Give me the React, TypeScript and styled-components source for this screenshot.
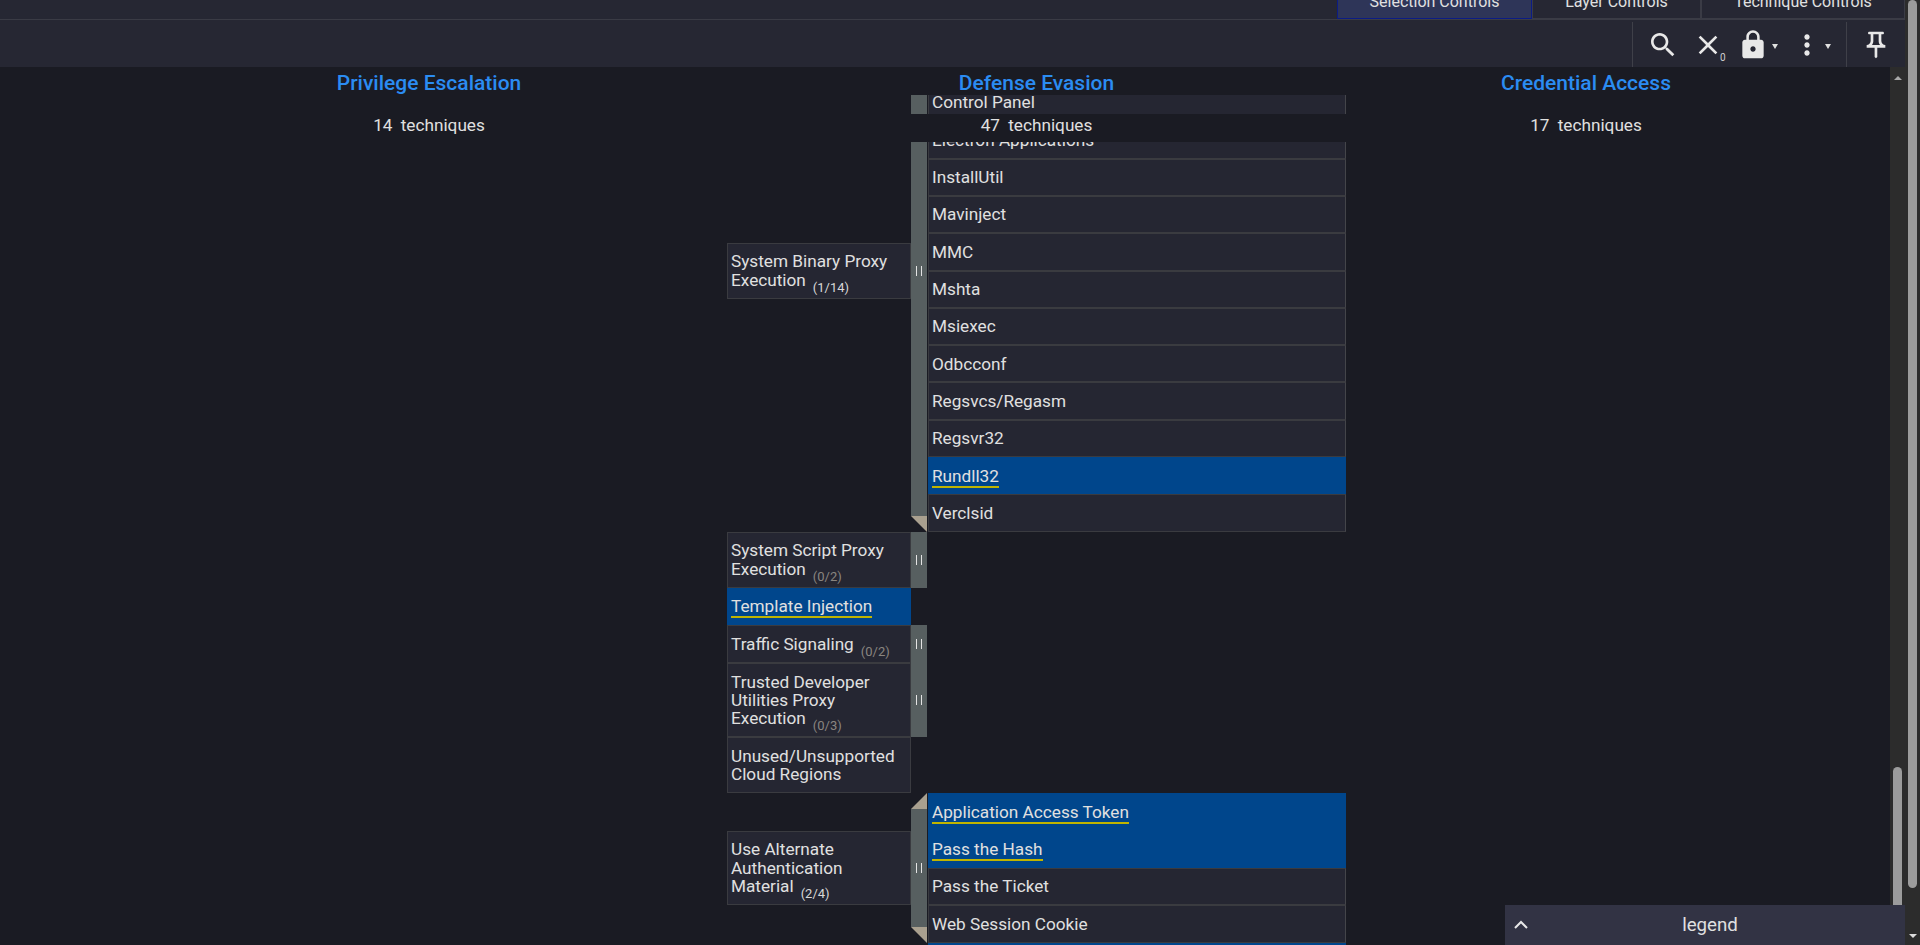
import React from "react";
import styled, { createGlobalStyle } from "styled-components";

const Global = createGlobalStyle`
  html, body { margin: 0; padding: 0; height: 100%; overflow: hidden; background: #1a1b23; }
  #root { height: 100%; }
  * { box-sizing: border-box; }
`;

const Page = styled.div`
  display: flex;
  width: 1920px;
  height: 945px;
  overflow: hidden;
  position: relative;
  font-family: Roboto, "Liberation Sans", sans-serif;
  font-size: 17.2px;
  line-height: 18.4px;
  color: #e0e0e0;
  background: #1a1b23;
`;
const Main = styled.div`
  flex: 1;
  min-width: 0;
  display: flex;
  flex-direction: column;
`;
const Header = styled.header`
  height: 67px;
  flex: none;
  background: #262733;
  display: flex;
  flex-direction: column;
`;
const Tabs = styled.div`
  height: 20px;
  flex: none;
  display: flex;
  justify-content: flex-end;
  align-items: flex-end;
  border-bottom: 1px solid #3a3b45;
`;
const Tab = styled.div<{ $w: number; $active?: boolean }>`
  width: ${(p) => p.$w}px;
  height: 20px;
  text-align: center;
  font-size: 16px;
  line-height: 6px;
  overflow: hidden;
  background: ${(p) => (p.$active ? "#2e3558" : "transparent")};
  border-left: 1px solid ${(p) => (p.$active ? "#0b1c85" : "#3a3b45")};
  border-right: 1px solid ${(p) => (p.$active ? "#0b1c85" : "#3a3b45")};
  border-bottom: 1px solid ${(p) => (p.$active ? "#0b1c85" : "#3a3b45")};
`;
const Toolbar = styled.div`
  flex: 1;
  display: flex;
  justify-content: flex-end;
  padding-top: 2px;
`;
const ToolGroup = styled.div<{ $w: number }>`
  width: ${(p) => p.$w}px;
  display: flex;
  border-left: 1px solid #3f4049;
  position: relative;
`;
const ToolButton = styled.div<{ $w: number; $left?: number }>`
  width: ${(p) => p.$w}px;
  margin-left: ${(p) => p.$left ?? 0}px;
  height: 45px;
  flex: none;
  display: flex;
  align-items: center;
  position: relative;
`;
const Icon = styled.svg`
  width: 32px;
  height: 32px;
  fill: #e8e8e8;
  flex: none;
`;
const Caret = styled.span<{ $gap: number }>`
  width: 0;
  height: 0;
  margin-left: ${(p) => p.$gap}px;
  margin-top: 3px;
  border-left: 3px solid transparent;
  border-right: 3px solid transparent;
  border-top: 5px solid #e0e0e0;
`;
const Badge = styled.span`
  position: absolute;
  left: 28px;
  top: 30px;
  font-size: 10px;
  line-height: 12px;
  color: #d0d0d0;
`;

const Body = styled.div`
  flex: 1;
  min-height: 0;
  display: flex;
`;
const Viewport = styled.div`
  flex: 1;
  min-width: 0;
  position: relative;
  overflow: hidden;
`;
const Sticky = styled.div`
  position: absolute;
  left: 0;
  right: 0;
  top: 0;
  display: flex;
  flex-direction: column;
  z-index: 2;
`;
const HeadRow = styled.div<{ $h: number; $solid?: boolean }>`
  height: ${(p) => p.$h}px;
  padding-left: 131px;
  display: grid;
  grid-template-columns: 596px 619px 480px;
  align-items: center;
  text-align: center;
  background: ${(p) => (p.$solid ? "#1a1b23" : "transparent")};
`;
const Title = styled.div`
  font-size: 21px;
  font-weight: 500;
  line-height: 26px;
  margin-top: 3px;
  color: #2b8cf2;
`;
const Count = styled.div`
  word-spacing: 4px;
  margin-top: -6px;
`;
const Matrix = styled.div`
  margin-top: -57.67px;
  margin-left: 727px;
  width: 619px;
`;
const Group = styled.div`
  display: grid;
  grid-template-columns: 184px 16px 419px;
`;
const Parent = styled.div<{ $on?: boolean }>`
  align-self: center;
  padding: 8.6px 3px;
  background: ${(p) => (p.$on ? "#00468c" : "#252632")};
  border: 1px solid ${(p) => (p.$on ? "#00468c" : "#3a3b40")};
`;
const Bar = styled.div`
  background: #575f60;
  position: relative;
  display: flex;
  align-items: center;
  justify-content: center;
`;
const Pause = styled.span`
  width: 6px;
  height: 10px;
  border-left: 1px solid #e4e4e4;
  border-right: 1px solid #e4e4e4;
`;
const Corner = styled.span<{ $top?: boolean }>`
  position: absolute;
  left: 0;
  ${(p) => (p.$top ? "top: 0;" : "bottom: 0;")}
  width: 0;
  height: 0;
  border-style: solid;
  ${(p) =>
    p.$top
      ? "border-width: 0 0 16px 16px; border-color: transparent transparent #a9a08f #1a1b23;"
      : "border-width: 16px 0 0 16px; border-color: #a9a08f transparent transparent #1a1b23;"}
`;
const Subs = styled.div`
  padding-left: 1px;
`;
const Sub = styled.div<{ $on?: boolean }>`
  padding: 8.46px 3px;
  background: ${(p) => (p.$on ? "#00468c" : "#252632")};
  border: 1px solid ${(p) => (p.$on ? "#00468c" : "#3a3b40")};
  border-right-color: ${(p) => (p.$on ? "#00468c" : "#44454a")};
`;
const Mark = styled.span`
  border-bottom: 2px solid #c0b400;
`;
const Ratio = styled.span<{ $zero?: boolean }>`
  font-size: 13px;
  margin-left: 7px;
  position: relative;
  top: 6px;
  line-height: 0;
  color: ${(p) => (p.$zero ? "#8a8580" : "#d8d8d8")};
`;

const ScrollTrack = styled.div<{ $pad: number }>`
  width: 15px;
  flex: none;
  background: #2c2c2c;
  display: flex;
  flex-direction: column;
  align-items: center;
  padding-top: ${(p) => p.$pad}px;
`;
const ArrowUp = styled.span`
  width: 0;
  height: 0;
  flex: none;
  border-left: 4px solid transparent;
  border-right: 4px solid transparent;
  border-bottom: 4px solid #a8a8a8;
`;
const ArrowDown = styled.span`
  width: 0;
  height: 0;
  flex: none;
  margin-top: auto;
  margin-bottom: 7px;
  border-left: 4.5px solid transparent;
  border-right: 4.5px solid transparent;
  border-top: 4.5px solid #dcdcdc;
`;
const Thumb = styled.div<{ $top: number; $h: number }>`
  width: 9px;
  height: ${(p) => p.$h}px;
  margin-top: ${(p) => p.$top}px;
  flex: none;
  background: #9c9c9c;
  border-radius: 4.5px;
`;
const Legend = styled.div`
  position: absolute;
  left: 1505px;
  bottom: 0;
  width: 400px;
  height: 40px;
  padding-left: 10px;
  font-size: 18.7px;
  background: #323344;
  display: flex;
  align-items: center;
  justify-content: center;
  z-index: 3;
`;
const Chevron = styled.svg`
  position: absolute;
  left: 8px;
  top: 12px;
  width: 16px;
  height: 16px;
  fill: none;
  stroke: #e8e8e8;
  stroke-width: 2;
`;

type P = { label: string; ratio?: string; zero?: boolean; on?: boolean };
const Ptext = ({ label, ratio, zero, on }: P) => (
  <>
    {on ? <Mark>{label}</Mark> : label}
    {ratio && <Ratio $zero={zero}>{ratio}</Ratio>}
  </>
);

const binary = [
  "CMSTP", "Compiled HTML File", "Control Panel", "Electron Applications", "InstallUtil", "Mavinject", "MMC",
  "Mshta", "Msiexec", "Odbcconf", "Regsvcs/Regasm", "Regsvr32", "Rundll32", "Verclsid",
];
const alt = ["Application Access Token", "Pass the Hash", "Pass the Ticket", "Web Session Cookie"];
const Row = (props: { text: string; on?: boolean }) => (
  <Sub $on={props.on}>{props.on ? <Mark>{props.text}</Mark> : props.text}</Sub>
);

export default function App() {
  return (
    <Page>
      <Global />
      <Main>
        <Header>
          <Tabs>
            <Tab $w={195} $active>Selection Controls</Tab>
            <Tab $w={169}>Layer Controls</Tab>
            <Tab $w={204}>Technique Controls</Tab>
          </Tabs>
          <Toolbar>
            <ToolGroup $w={214}>
              <ToolButton $w={45} $left={14}>
                <Icon viewBox="0 0 24 24"><path d="M15.5 14h-.79l-.28-.27C15.41 12.59 16 11.11 16 9.5 16 5.91 13.09 3 9.5 3S3 5.91 3 9.5 5.91 16 9.5 16c1.61 0 3.09-.59 4.23-1.57l.27.28v.79l5 4.99L20.49 19l-4.99-5zm-6 0C7.01 14 5 11.99 5 9.5S7.01 5 9.5 5 14 7.01 14 9.5 11.99 14 9.5 14z" /></Icon>
              </ToolButton>
              <ToolButton $w={45}>
                <Icon viewBox="0 0 24 24"><path d="M19 6.41L17.59 5 12 10.59 6.41 5 5 6.41 10.59 12 5 17.59 6.41 19 12 13.41 17.59 19 19 17.59 13.41 12z" /></Icon>
                <Badge>0</Badge>
              </ToolButton>
              <ToolButton $w={54}>
                <Icon viewBox="0 0 24 24"><path d="M18 8h-1V6c0-2.76-2.24-5-5-5S7 3.24 7 6v2H6c-1.1 0-2 .9-2 2v10c0 1.1.9 2 2 2h12c1.1 0 2-.9 2-2V10c0-1.1-.9-2-2-2zm-6 9c-1.1 0-2-.9-2-2s.9-2 2-2 2 .9 2 2-.9 2-2 2zm3.1-9H8.9V6c0-1.71 1.39-3.1 3.1-3.1 1.71 0 3.1 1.39 3.1 3.1v2z" /></Icon>
                <Caret $gap={3} />
              </ToolButton>
              <ToolButton $w={50}>
                <Icon viewBox="0 0 24 24"><path d="M12 8c1.1 0 2-.9 2-2s-.9-2-2-2-2 .9-2 2 .9 2 2 2zm0 2c-1.1 0-2 .9-2 2s.9 2 2 2 2-.9 2-2-.9-2-2-2zm0 6c-1.1 0-2 .9-2 2s.9 2 2 2 2-.9 2-2-.9-2-2-2z" /></Icon>
                <Caret $gap={2} />
              </ToolButton>
            </ToolGroup>
            <ToolGroup $w={59}>
              <ToolButton $w={45} $left={13}>
                <Icon viewBox="0 0 24 24"><path d="M14 4v5c0 1.12.37 2.16 1 3H9c.65-.86 1-1.9 1-3V4h4m3-2H7c-.55 0-1 .45-1 1s.45 1 1 1h1v5c0 1.66-1.34 3-3 3v2h5.97v7l1 1 1-1v-7H19v-2c-1.66 0-3-1.34-3-3V4h1c.55 0 1-.45 1-1s-.45-1-1-1z" /></Icon>
              </ToolButton>
            </ToolGroup>
          </Toolbar>
        </Header>
        <Body>
          <Viewport>
            <Sticky>
              <HeadRow $h={28} $solid>
                <Title>Privilege Escalation</Title>
                <Title>Defense Evasion</Title>
                <Title>Credential Access</Title>
              </HeadRow>
              <HeadRow $h={19} />
              <HeadRow $h={28} $solid>
                <Count>14 techniques</Count>
                <Count>47 techniques</Count>
                <Count>17 techniques</Count>
              </HeadRow>
            </Sticky>
            <Matrix>
              <Group>
                <Parent><Ptext label="System Binary Proxy Execution" ratio="(1/14)" /></Parent>
                <Bar><Pause /><Corner /></Bar>
                <Subs>
                  {binary.map((s) => <Row key={s} text={s} on={s === "Rundll32"} />)}
                </Subs>
              </Group>
              <Group>
                <Parent><Ptext label="System Script Proxy Execution" ratio="(0/2)" zero /></Parent>
                <Bar><Pause /></Bar>
              </Group>
              <Group>
                <Parent $on><Ptext label="Template Injection" on /></Parent>
              </Group>
              <Group>
                <Parent><Ptext label="Traffic Signaling" ratio="(0/2)" zero /></Parent>
                <Bar><Pause /></Bar>
              </Group>
              <Group>
                <Parent><Ptext label="Trusted Developer Utilities Proxy Execution" ratio="(0/3)" zero /></Parent>
                <Bar><Pause /></Bar>
              </Group>
              <Group>
                <Parent>Unused/Unsupported Cloud Regions</Parent>
              </Group>
              <Group>
                <Parent><Ptext label="Use Alternate Authentication Material" ratio="(2/4)" /></Parent>
                <Bar><Pause /><Corner $top /><Corner /></Bar>
                <Subs>
                  {alt.map((s, i) => <Row key={s} text={s} on={i < 2} />)}
                </Subs>
              </Group>
              <Group>
                <span />
                <span />
                <Subs><Sub $on>&nbsp;</Sub></Subs>
              </Group>
            </Matrix>
          </Viewport>
          <ScrollTrack $pad={9}>
            <ArrowUp />
            <Thumb $top={687} $h={400} />
          </ScrollTrack>
        </Body>
      </Main>
      <ScrollTrack $pad={0}>
        <Thumb $top={0} $h={888} />
        <ArrowDown />
      </ScrollTrack>
      <Legend>
        <Chevron viewBox="0 0 16 16"><path d="M2 11l6-6 6 6" /></Chevron>
        legend
      </Legend>
    </Page>
  );
}
